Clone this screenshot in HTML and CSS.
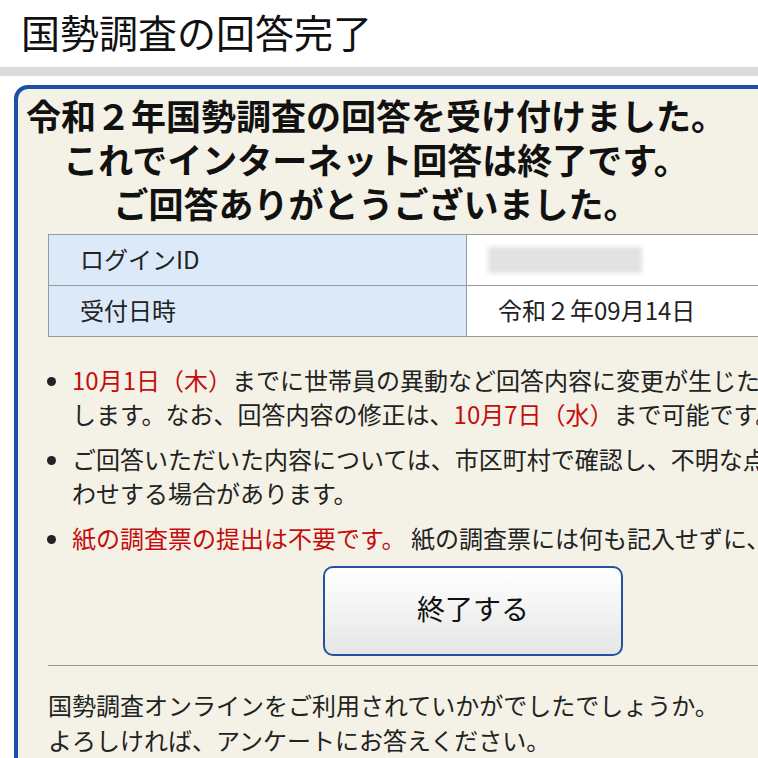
FILE: index.html
```html
<!DOCTYPE html>
<html lang="ja">
<head>
  <meta charset="UTF-8">
  <title>国勢調査の回答完了</title>
  <link rel="stylesheet" href="styles.css">
</head>
<body>

  <header class="page-head">
    <h1>国勢調査の回答完了</h1>
  </header>
  <div class="band"></div>

  <div class="card">
    <h2 class="lead">令和２年国勢調査の回答を受け付けました。<br>これでインターネット回答は終了です。<br>ご回答ありがとうございました。</h2>

    <table class="info">
      <tr>
        <th>ログインID</th>
        <td><div class="masked"></div></td>
      </tr>
      <tr>
        <th>受付日時</th>
        <td>令和２年09月14日</td>
      </tr>
    </table>

    <ul class="notes">
      <li><span class="red">10月1日（木）</span>までに世帯員の異動など回答内容に変更が生じた場合は、修正をお願い<br>します。なお、回答内容の修正は、<span class="red">10月7日（水）</span>まで可能です。</li>
      <li>ご回答いただいた内容については、市区町村で確認し、不明な点などがあればお問い合<br>わせする場合があります。</li>
      <li><span class="red">紙の調査票の提出は不要です。</span> 紙の調査票には何も記入せずに、処分してください。</li>
    </ul>

    <button class="finish">終了する</button>

    <hr class="sep">

    <p class="survey">国勢調査オンラインをご利用されていかがでしたでしょうか。<br>よろしければ、アンケートにお答えください。</p>
  </div>

</body>
</html>
```

FILE: styles.css
```css
html {
  overflow: hidden;
}
body {
  margin: 0;
  font-family: "Noto Sans CJK JP", "Noto Sans", sans-serif;
  background: #fff;
  color: #222;
}
.page-head {
  height: 67px;
  padding-left: 21px;
  box-sizing: border-box;
}
.page-head h1 {
  margin: 0;
  padding-top: 12px;
  font-size: 39px;
  line-height: 39px;
  font-weight: normal;
  color: #111;
}
.band {
  height: 9px;
  background: #dcdcdc;
  margin-bottom: 9px;
}
.card {
  margin-left: 14px;
  width: 910px;
  border: 4px solid #1d4fa8;
  border-radius: 14px;
  background: #f4f2e6;
  padding: 4px 0 40px;
}
.lead {
  width: 716px;
  margin: 0;
  text-align: center;
  font-size: 35px;
  line-height: 44px;
  font-weight: bold;
  color: #111;
  white-space: nowrap;
}
.info {
  margin: 9px 0 0 30px;
  border-collapse: collapse;
  width: 820px;
  font-size: 24px;
}
.info th,
.info td {
  height: 47px;
  padding: 0 0 3px 31px;
  border: 1px solid #999;
  text-align: left;
  font-weight: normal;
}
.info th {
  width: 386px;
  background: #dce9f9;
}
.info td {
  background: #fff;
}
.masked {
  width: 154px;
  height: 26px;
  margin: 2px 0 0 -10px;
  background: #e2e2e2;
  filter: blur(2px);
}
.notes {
  margin: 26px 0 0;
  padding-left: 54px;
  font-size: 24px;
  line-height: 34px;
  white-space: nowrap;
}
.notes li {
  margin-bottom: 11px;
}
.red {
  color: #c40d0d;
}
.finish {
  display: block;
  margin: 10px 0 0 305px;
  width: 300px;
  height: 90px;
  padding-bottom: 8px;
  border: 2px solid #2452a0;
  border-radius: 10px;
  background: linear-gradient(#ffffff, #e6e6e6);
  font-family: inherit;
  font-size: 28px;
  color: #111;
  cursor: pointer;
}
.sep {
  margin: 9px 0 0 30px;
  border: none;
  border-top: 1px solid #999;
}
.survey {
  margin: 21px 0 0 30px;
  font-size: 24px;
  line-height: 35px;
  white-space: nowrap;
}
```
